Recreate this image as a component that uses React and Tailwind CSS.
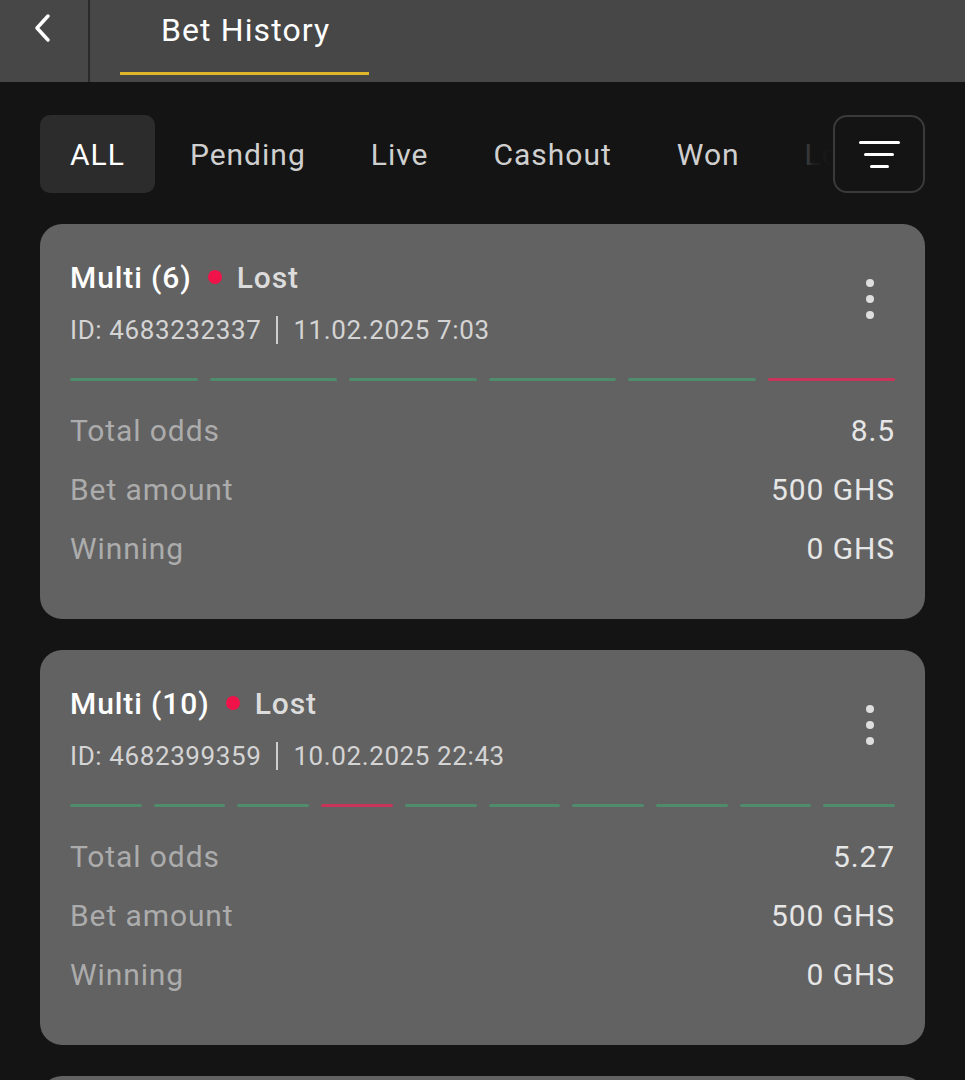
import React from 'react'

const bets = [
  {
    id: '4683232337',
    title: 'Multi (6)',
    date: '11.02.2025 7:03',
    legs: ['w', 'w', 'w', 'w', 'w', 'l'],
    odds: '8.5',
    amount: '500 GHS',
    winning: '0 GHS',
  },
  {
    id: '4682399359',
    title: 'Multi (10)',
    date: '10.02.2025 22:43',
    legs: ['w', 'w', 'w', 'l', 'w', 'w', 'w', 'w', 'w', 'w'],
    odds: '5.27',
    amount: '500 GHS',
    winning: '0 GHS',
  },
]

const tabs = ['ALL', 'Pending', 'Live', 'Cashout', 'Won', 'Lost']

function BetCard({ bet }) {
  return (
    <div className="rounded-[22px] bg-[#626262] px-[30px] pt-[33px] pb-[41px]">
      {/* Encabezado de la apuesta */}
      <div className="flex items-start justify-between">
        <div>
          <div className="flex items-center h-[40px] text-[30px] font-medium tracking-[0.9px]">
            <span className="text-white">{bet.title}</span>
            <span className="ml-[16px] mr-[15px] w-[14px] h-[14px] rounded-full bg-[#f0134a]"></span>
            <span className="text-[#dcdcdc]">Lost</span>
          </div>
          <div className="mt-[15px] flex items-center h-[36px] text-[26px] tracking-[0.6px] text-[#d4d4d4]">
            <span>ID: {bet.id}</span>
            <span className="mx-[15px] w-[2px] h-[28px] bg-[#cfcfcf]"></span>
            <span>{bet.date}</span>
          </div>
        </div>
        <div className="mt-[22px] mr-[20px] flex flex-col items-center gap-[8px] w-[10px]">
          <span className="w-[8px] h-[8px] rounded-full bg-[#dedede]"></span>
          <span className="w-[8px] h-[8px] rounded-full bg-[#dedede]"></span>
          <span className="w-[8px] h-[8px] rounded-full bg-[#dedede]"></span>
        </div>
      </div>

      {/* Barras de selecciones */}
      <div className="mt-[30px] flex gap-[12px]">
        {bet.legs.map((leg, i) => (
          <div
            key={i}
            className={`flex-1 h-[3px] rounded-full ${leg === 'l' ? 'bg-[#c8345a]' : 'bg-[#4e8c6c]'}`}
          ></div>
        ))}
      </div>

      <div className="mt-[20px] text-[30px] tracking-[0.9px]">
        <div className="flex justify-between items-center h-[59px]">
          <span className="text-[#acacac]">Total odds</span>
          <span className="text-[#e6e6e6]">{bet.odds}</span>
        </div>
        <div className="flex justify-between items-center h-[59px]">
          <span className="text-[#acacac]">Bet amount</span>
          <span className="text-[#e6e6e6]">{bet.amount}</span>
        </div>
        <div className="flex justify-between items-center h-[59px]">
          <span className="text-[#acacac]">Winning</span>
          <span className="text-[#e6e6e6]">{bet.winning}</span>
        </div>
      </div>
    </div>
  )
}

export default function App() {
  return (
    <div
      className="w-[965px] h-[1080px] overflow-hidden bg-[#141414]"
      style={{ fontFamily: 'Roboto, "Noto Sans", sans-serif' }}
    >
      {/* Barra superior */}
      <div className="flex h-[82px] bg-[#474747]">
        <div className="w-[90px] flex items-center justify-center border-r-2 border-[#2a2a2a]">
          <svg width="22" height="32" viewBox="0 0 22 32" fill="none" className="mb-[26px] mr-[2px]">
            <path d="M16 4 L5 16 L16 28" stroke="white" strokeWidth="3.5" strokeLinecap="round" strokeLinejoin="round" />
          </svg>
        </div>
        <div className="ml-[30px] flex flex-col">
          <div className="h-[72px] flex items-start pt-[6px] pl-[41px] text-[32px] tracking-[1.1px] text-white">
            Bet History
          </div>
          <div className="h-[3px] w-[249px] bg-[#e0b62a]"></div>
        </div>
      </div>

      {/* Filtros */}
      <div className="relative mt-[33px] mx-[40px] h-[78px]">
        <div className="flex gap-[5px] h-full overflow-hidden">
          {tabs.map((t, i) => (
            <div
              key={t}
              className={`shrink-0 flex items-center px-[30px] rounded-[10px] text-[30px] tracking-[1px] ${i === 0 ? 'bg-[#2c2c2c] text-white' : 'text-[#cfcfcf]'}`}
            >
              {t}
            </div>
          ))}
        </div>
        <div className="absolute right-[92px] top-0 h-full w-[40px] bg-gradient-to-r from-[#141414]/40 via-[#141414]/95 via-50% to-[#141414]"></div>
        <div className="absolute right-0 top-0 w-[92px] h-full rounded-[14px] border-2 border-[#3a3a3a] bg-[#141414] flex flex-col items-center justify-center gap-[9px]">
          <span className="w-[41px] h-[3px] rounded-full bg-white"></span>
          <span className="w-[30px] h-[3px] rounded-full bg-white"></span>
          <span className="w-[19px] h-[3px] rounded-full bg-white"></span>
        </div>
      </div>

      {/* Lista de apuestas */}
      <div className="mt-[31px] mx-[40px] flex flex-col gap-[31px]">
        {bets.map(b => (
          <BetCard key={b.id} bet={b} />
        ))}
        <div className="h-[100px] rounded-[22px] bg-[#626262]"></div>
      </div>
    </div>
  )
}
